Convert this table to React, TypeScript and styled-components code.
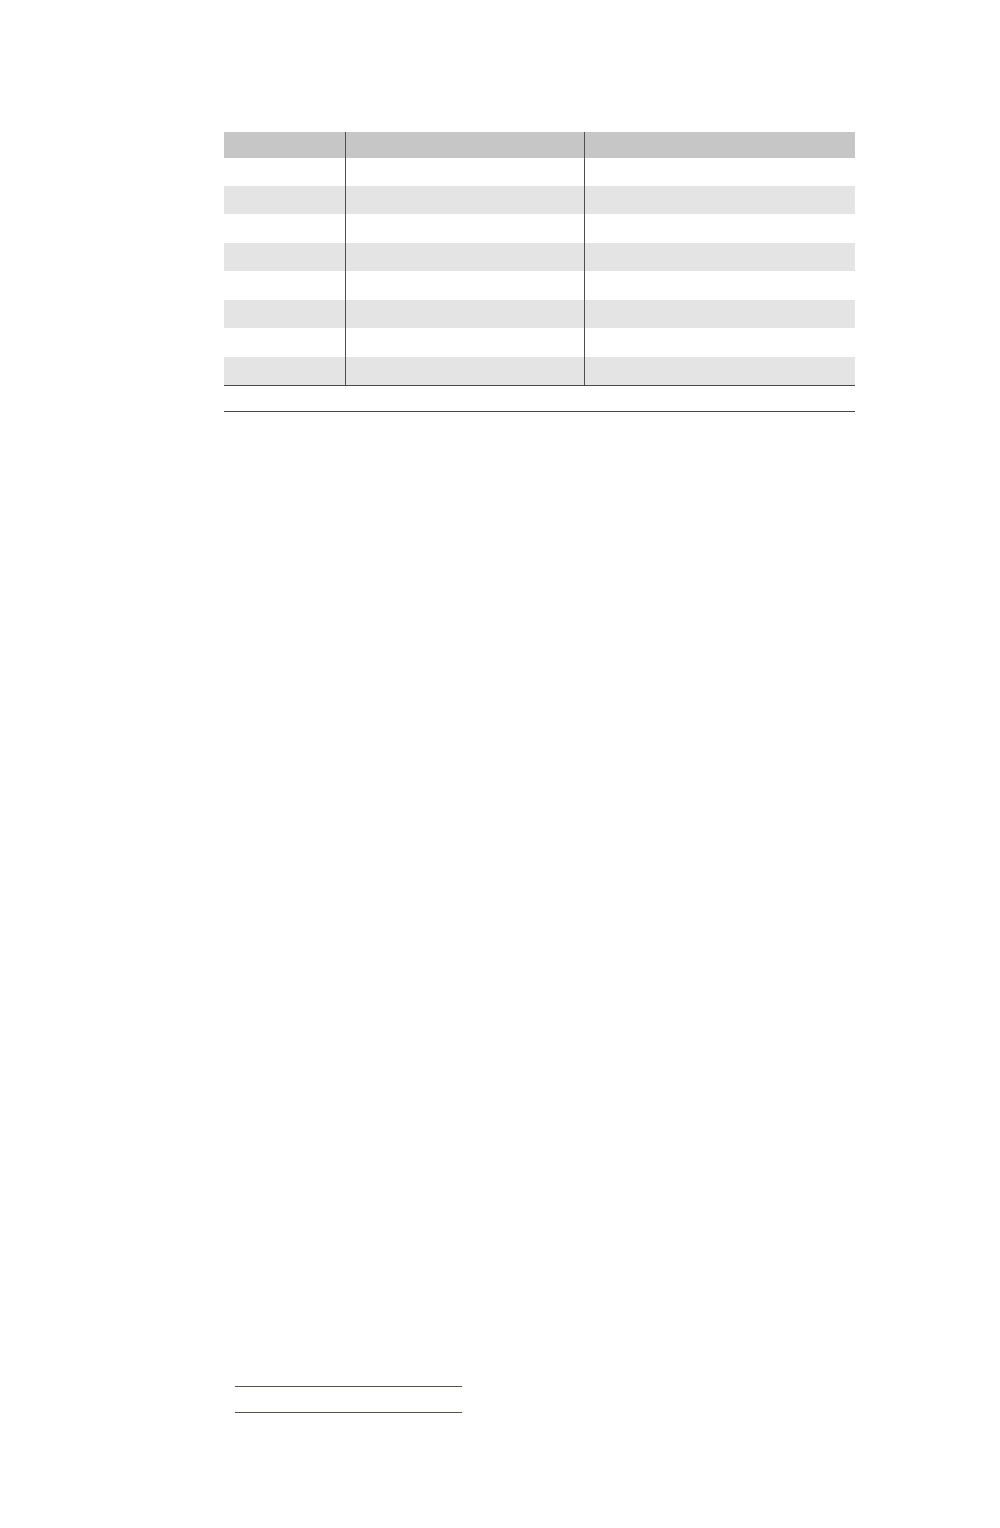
import React from "react";
import styled, { createGlobalStyle } from "styled-components";

const Global = createGlobalStyle`
  html, body { margin: 0; padding: 0; background: #ffffff; }
  body { font-family: "Liberation Sans", Arial, sans-serif; }
`;

const Page = styled.div`
  width: 1000px;
  height: 1528px;
  display: flex;
  flex-direction: column;
  box-sizing: border-box;
  padding-top: 132px;
`;

const Table = styled.div`
  margin-left: 224px;
  width: 631px;
  display: flex;
  flex-direction: column;
`;

const Row = styled.div<{ $tone: "head" | "odd" | "even"; $h: number }>`
  display: grid;
  grid-template-columns: 121px 239px 1fr;
  height: ${(p) => p.$h}px;
  background: ${(p) =>
    p.$tone === "head" ? "#c6c6c6" : p.$tone === "even" ? "#e4e4e4" : "#ffffff"};
`;

const Cell = styled.div<{ $divider?: boolean }>`
  box-sizing: border-box;
  border-left: ${(p) => (p.$divider ? "1px solid #4f4f4f" : "none")};
  font-size: 12px;
  color: #222;
`;

const BodyEnd = styled.div`
  height: 25px;
  border-top: 1px solid #4a4a44;
  border-bottom: 1px solid #4a4a44;
`;

const Notes = styled.div`
  margin-top: auto;
  margin-bottom: 115px;
  margin-left: 235px;
  width: 227px;
  display: flex;
  flex-direction: column;
`;

const Rule = styled.div<{ $gap: number }>`
  height: 1px;
  background: #55524a;
  margin-top: ${(p) => p.$gap}px;
`;

const rowHeights = [28, 28, 29, 28, 29, 28, 29, 28];

export default function App() {
  return (
    <>
      <Global />
      <Page>
        <Table>
          <Row $tone="head" $h={26}>
            <Cell />
            <Cell $divider />
            <Cell $divider />
          </Row>
          {rowHeights.map((h, i) => (
            <Row key={i} $tone={i % 2 === 1 ? "even" : "odd"} $h={h}>
              <Cell />
              <Cell $divider />
              <Cell $divider />
            </Row>
          ))}
          <BodyEnd />
        </Table>
        <Notes>
          <Rule $gap={0} />
          <Rule $gap={25} />
        </Notes>
      </Page>
    </>
  );
}
